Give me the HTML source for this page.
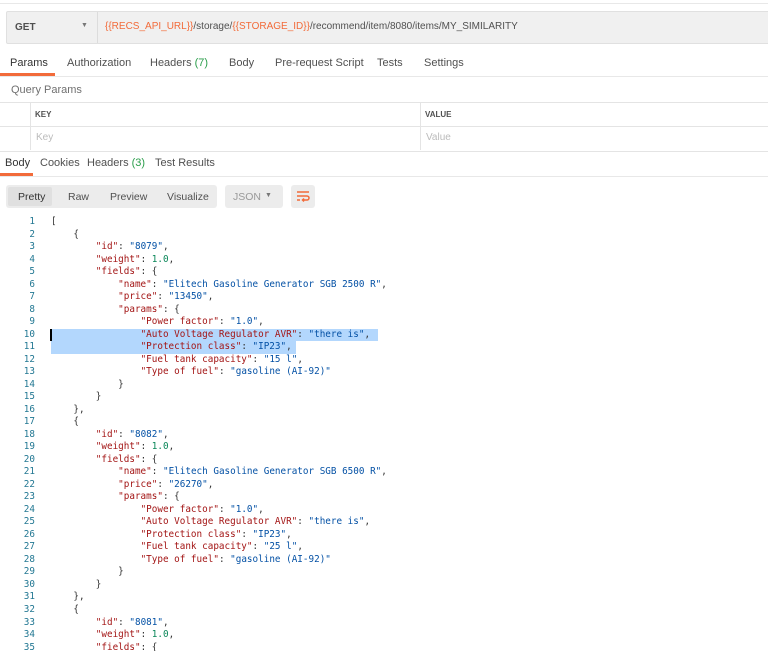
<!DOCTYPE html><html><head><style>
html,body{margin:0;width:768px;height:651px;overflow:hidden}
body{background:#fff;font-family:"Liberation Sans",sans-serif;font-size:11px;color:#505050;position:relative}
.a{position:absolute}
.o{color:#f26b3a}
.g{color:#2a9d4a}
#code{position:absolute;left:0;top:216px;font-family:"DejaVu Sans Mono",monospace;font-size:9.3px;white-space:normal}
#code div{height:12.53px;line-height:12.53px;position:relative;white-space:pre}
#code .n{display:inline-block;width:35px;text-align:right;color:#237893;margin-right:16px}
.k{color:#a31515}.s{color:#0451a5}.m{color:#098658}.p{color:#333}
.hl{position:absolute;background:#b3d7fd;height:12.53px}
</style></head><body>
<div class="a" style="left:0;top:3px;width:768px;height:1px;background:#e8e8e8"></div>
<div class="a" style="left:6px;top:11px;width:762px;height:31px;background:#f0f0f0;border:1px solid #e0e0e0;border-radius:2px"></div>
<div class="a" style="left:97px;top:12px;width:1px;height:31px;background:#dcdcdc"></div>
<div class="a" style="left:15px;top:22px;font-weight:bold;color:#505050;font-size:10px">GET</div>
<div class="a" style="left:81px;top:22px;font-size:7px;color:#777">▼</div>
<div class="a" style="left:105px;top:21px;font-size:10px;color:#505050"><span class="o">{{RECS_API_URL}}</span>/storage/<span class="o">{{STORAGE_ID}}</span>/recommend/item/8080/items/MY_SIMILARITY</div>
<div class="a" style="left:0;top:50px;width:768px;height:26px;border-bottom:1px solid #e8e8e8"></div>
<div class="a" style="top:57px;left:10px;color:#333">Params</div>
<div class="a" style="left:0;top:73px;width:55px;height:3px;background:#f26b3a"></div>
<div class="a" style="top:57px;left:67px">Authorization</div>
<div class="a" style="top:57px;left:150px">Headers <span class="g">(7)</span></div>
<div class="a" style="top:57px;left:229px">Body</div>
<div class="a" style="top:57px;left:275px">Pre-request Script</div>
<div class="a" style="top:57px;left:377px">Tests</div>
<div class="a" style="top:57px;left:424px">Settings</div>
<div class="a" style="top:84px;left:11px;color:#707070">Query Params</div>
<div class="a" style="left:0;top:102px;width:768px;height:48px;border-top:1px solid #e4e4e4;border-bottom:1px solid #e4e4e4"></div>
<div class="a" style="left:0;top:126px;width:768px;height:1px;background:#e4e4e4"></div>
<div class="a" style="left:30px;top:103px;width:1px;height:47px;background:#e4e4e4"></div>
<div class="a" style="left:420px;top:103px;width:1px;height:47px;background:#e4e4e4"></div>
<div class="a" style="left:35px;top:110px;font-size:8px;font-weight:bold;color:#505050">KEY</div>
<div class="a" style="left:425px;top:110px;font-size:8px;font-weight:bold;color:#505050">VALUE</div>
<div class="a" style="left:36px;top:132px;color:#bbb;font-size:10px">Key</div>
<div class="a" style="left:426px;top:132px;color:#bbb;font-size:10px">Value</div>
<div class="a" style="left:0;top:150px;width:768px;height:26px;border-bottom:1px solid #e8e8e8"></div>
<div class="a" style="top:157px;left:5px;color:#333">Body</div>
<div class="a" style="left:0;top:173px;width:33px;height:3px;background:#f26b3a"></div>
<div class="a" style="top:157px;left:40px">Cookies</div>
<div class="a" style="top:157px;left:87px">Headers <span class="g">(3)</span></div>
<div class="a" style="top:157px;left:155px">Test Results</div>
<div class="a" style="left:6px;top:185px;width:211px;height:23px;background:#ececec;border-radius:3px"></div>
<div class="a" style="left:8px;top:187px;width:44px;height:19px;background:#e0e0e0;border-radius:2px"></div>
<div class="a" style="top:191px;left:18px;color:#333;font-size:10.5px">Pretty</div>
<div class="a" style="top:191px;left:68px;font-size:10.5px">Raw</div>
<div class="a" style="top:191px;left:110px;font-size:10.5px">Preview</div>
<div class="a" style="top:191px;left:167px;font-size:10.5px">Visualize</div>
<div class="a" style="left:225px;top:185px;width:58px;height:23px;background:#ececec;border-radius:3px"></div>
<div class="a" style="top:191px;left:233px;color:#999;font-size:10.5px">JSON</div>
<div class="a" style="top:192px;left:265px;color:#777;font-size:7px">▼</div>
<div class="a" style="left:291px;top:185px;width:24px;height:23px;background:#ececec;border-radius:3px"></div>
<svg class="a" style="left:295px;top:189px" width="16" height="15" viewBox="0 0 16 15"><path d="M2 3H14M2 7H12a2 2 0 0 1 0 4H8M2 11H5M9 9.5L7.5 11L9 12.5" stroke="#f26b3a" stroke-width="1.5" fill="none"/></svg>
<div class="hl" style="left:51px;top:328.8px;width:327px"></div>
<div class="hl" style="left:51px;top:341.3px;width:245px"></div>
<div class="a" style="left:50px;top:329px;width:2px;height:12px;background:#000"></div>
<div id="code"><div><span class="n">1</span><span class="p">[</span></div><div><span class="n">2</span><span class="p">    {</span></div><div><span class="n">3</span>        <span class="k">"id"</span><span class="p">: </span><span class="s">"8079"</span><span class="p">,</span></div><div><span class="n">4</span>        <span class="k">"weight"</span><span class="p">: </span><span class="m">1.0</span><span class="p">,</span></div><div><span class="n">5</span>        <span class="k">"fields"</span><span class="p">: {</span></div><div><span class="n">6</span>            <span class="k">"name"</span><span class="p">: </span><span class="s">"Elitech Gasoline Generator SGB 2500 R"</span><span class="p">,</span></div><div><span class="n">7</span>            <span class="k">"price"</span><span class="p">: </span><span class="s">"13450"</span><span class="p">,</span></div><div><span class="n">8</span>            <span class="k">"params"</span><span class="p">: {</span></div><div><span class="n">9</span>                <span class="k">"Power factor"</span><span class="p">: </span><span class="s">"1.0"</span><span class="p">,</span></div><div><span class="n">10</span>                <span class="k">"Auto Voltage Regulator AVR"</span><span class="p">: </span><span class="s">"there is"</span><span class="p">,</span></div><div><span class="n">11</span>                <span class="k">"Protection class"</span><span class="p">: </span><span class="s">"IP23"</span><span class="p">,</span></div><div><span class="n">12</span>                <span class="k">"Fuel tank capacity"</span><span class="p">: </span><span class="s">"15 l"</span><span class="p">,</span></div><div><span class="n">13</span>                <span class="k">"Type of fuel"</span><span class="p">: </span><span class="s">"gasoline (AI-92)"</span></div><div><span class="n">14</span><span class="p">            }</span></div><div><span class="n">15</span><span class="p">        }</span></div><div><span class="n">16</span><span class="p">    },</span></div><div><span class="n">17</span><span class="p">    {</span></div><div><span class="n">18</span>        <span class="k">"id"</span><span class="p">: </span><span class="s">"8082"</span><span class="p">,</span></div><div><span class="n">19</span>        <span class="k">"weight"</span><span class="p">: </span><span class="m">1.0</span><span class="p">,</span></div><div><span class="n">20</span>        <span class="k">"fields"</span><span class="p">: {</span></div><div><span class="n">21</span>            <span class="k">"name"</span><span class="p">: </span><span class="s">"Elitech Gasoline Generator SGB 6500 R"</span><span class="p">,</span></div><div><span class="n">22</span>            <span class="k">"price"</span><span class="p">: </span><span class="s">"26270"</span><span class="p">,</span></div><div><span class="n">23</span>            <span class="k">"params"</span><span class="p">: {</span></div><div><span class="n">24</span>                <span class="k">"Power factor"</span><span class="p">: </span><span class="s">"1.0"</span><span class="p">,</span></div><div><span class="n">25</span>                <span class="k">"Auto Voltage Regulator AVR"</span><span class="p">: </span><span class="s">"there is"</span><span class="p">,</span></div><div><span class="n">26</span>                <span class="k">"Protection class"</span><span class="p">: </span><span class="s">"IP23"</span><span class="p">,</span></div><div><span class="n">27</span>                <span class="k">"Fuel tank capacity"</span><span class="p">: </span><span class="s">"25 l"</span><span class="p">,</span></div><div><span class="n">28</span>                <span class="k">"Type of fuel"</span><span class="p">: </span><span class="s">"gasoline (AI-92)"</span></div><div><span class="n">29</span><span class="p">            }</span></div><div><span class="n">30</span><span class="p">        }</span></div><div><span class="n">31</span><span class="p">    },</span></div><div><span class="n">32</span><span class="p">    {</span></div><div><span class="n">33</span>        <span class="k">"id"</span><span class="p">: </span><span class="s">"8081"</span><span class="p">,</span></div><div><span class="n">34</span>        <span class="k">"weight"</span><span class="p">: </span><span class="m">1.0</span><span class="p">,</span></div><div><span class="n">35</span>        <span class="k">"fields"</span><span class="p">: {</span></div></div>
</body></html>
